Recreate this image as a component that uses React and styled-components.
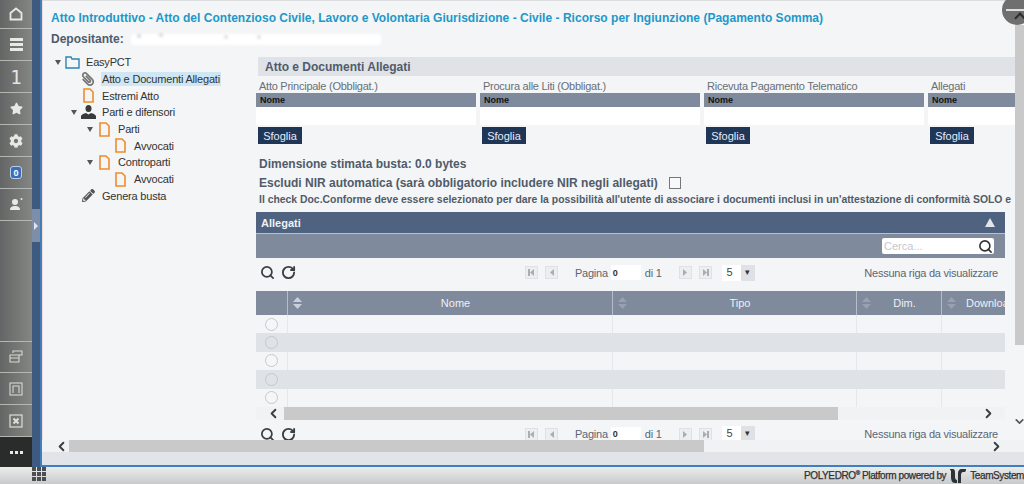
import React from 'react';
import styled, { createGlobalStyle } from 'styled-components';
import { FaStar, FaCog, FaPencilAlt, FaPaperclip } from 'react-icons/fa';
import { Search, RotateCw, ChevronLeft, ChevronRight, ChevronDown } from 'lucide-react';

const GlobalStyle = createGlobalStyle`
  html, body {
    margin: 0;
    padding: 0;
    background: #f3f5f7;
    overflow: hidden;
  }
  * { box-sizing: border-box; }
`;

const Frame = styled.div`
  width: 1024px;
  height: 484px;
  display: flex;
  flex-direction: column;
  position: relative;
  overflow: hidden;
  font-family: "Liberation Sans", Arial, sans-serif;
`;

const Shell = styled.div`
  display: flex;
  height: 467px;
`;

/* left rail */
const Rail = styled.nav`
  width: 32px;
  flex: none;
  display: flex;
  flex-direction: column;
  justify-content: space-between;
  background: linear-gradient(90deg, #646665, #848683);
`;

const RailGroup = styled.div`
  display: flex;
  flex-direction: column;
`;

const RailItem = styled.div`
  height: ${(p) => p.$h || 32}px;
  display: flex;
  align-items: center;
  justify-content: center;
  color: #e8e9e6;
  border-bottom: 1px solid #b4b6b3;
  ${(p) => p.$top && 'border-top: 1px solid #b4b6b3;'}
`;

const RailNumber = styled.span`
  font-family: "DejaVu Sans Mono", monospace;
  font-size: 19px;
  color: #e4e5e2;
`;

const Badge = styled.span`
  width: 12px;
  height: 13px;
  border-radius: 3px;
  background: #3f6db5;
  border: 1px solid #b9cdf0;
  color: #fff;
  font-size: 9px;
  font-weight: bold;
  display: flex;
  align-items: center;
  justify-content: center;
`;

const More = styled.div`
  height: 30px;
  background: #2a2b2b;
  display: flex;
  align-items: center;
  justify-content: center;
  gap: 2px;
`;

const Dot = styled.i`
  width: 3px;
  height: 3px;
  background: #e8e8e8;
`;

const Strip = styled.div`
  width: 8px;
  flex: none;
  background: #3e5a7e;
  position: relative;
`;

const StripHandle = styled.div`
  position: absolute;
  top: 209px;
  left: 0;
  width: 8px;
  height: 33px;
  background: #7d8fa8;
  display: flex;
  align-items: center;
  justify-content: center;
  &::after {
    content: '';
    border-left: 4px solid #dfe6ef;
    border-top: 4px solid transparent;
    border-bottom: 4px solid transparent;
  }
`;

/* main window */
const Window = styled.div`
  flex: 1;
  min-width: 0;
  display: flex;
  flex-direction: column;
  border-left: 2px solid #3f7fc0;
  border-bottom: 2px solid #3f7fc0;
`;

const Viewport = styled.div`
  height: 440px;
  display: flex;
  border-top: 1px solid #dcdddf;
  border-left: 1px solid #f2ddd6;
`;

const Page = styled.main`
  flex: 1;
  min-width: 0;
  overflow: hidden;
  background: #f3f5f7;
`;

const VScroll = styled.div`
  width: 9px;
  flex: none;
  background: #f3f5f7;
  display: flex;
  flex-direction: column;
  align-items: center;
`;

const VThumb = styled.div`
  width: 9px;
  margin-top: 24px;
  height: 320px;
  background: #c9c9c9;
`;

const VArrow = styled.div`
  margin-top: 70px;
  color: #555;
  display: flex;
`;

const Collapse = styled.div`
  position: absolute;
  top: -5px;
  left: 1002px;
  width: 30px;
  height: 30px;
  border-radius: 50%;
  background: #6f6f6f;
  &::before {
    content: '';
    position: absolute;
    left: 4px;
    right: 6px;
    top: 14px;
    height: 2px;
    background: #dedede;
  }
  &::after {
    content: '';
    position: absolute;
    left: 14px;
    top: 19px;
    width: 6px;
    height: 6px;
    border-left: 2px solid #2e2e2e;
    border-top: 2px solid #2e2e2e;
    transform: rotate(45deg);
  }
`;

const Title = styled.h1`
  margin: 10px 0 0 8px;
  font-size: 12px;
  letter-spacing: 0.02px;
  line-height: 14px;
  font-weight: bold;
  color: #2198c9;
  white-space: nowrap;
`;

const Owner = styled.div`
  margin: 7px 0 0 8px;
  display: flex;
  align-items: center;
  height: 14px;
  font-size: 12px;
  font-weight: bold;
  color: #4f5b6b;
`;

const Redacted = styled.span`
  margin-left: 7px;
  width: 250px;
  height: 11px;
  background:
    radial-gradient(circle 2px at 8px 2px, #8a8a8a, transparent),
    radial-gradient(circle 2px at 30px 1px, #8a8a8a, transparent),
    radial-gradient(circle 2px at 95px 3px, #a0a0a0, transparent),
    radial-gradient(circle 2px at 128px 3px, #a0a0a0, transparent),
    #fff;
  filter: blur(1.5px);
`;

const Body = styled.div`
  margin-top: 8px;
  display: flex;
`;

/* tree */
const Tree = styled.ul`
  width: 213px;
  flex: none;
  margin: 0;
  padding: 0;
  list-style: none;
`;

const TreeRow = styled.li`
  height: 16.7px;
  display: flex;
  align-items: center;
  padding-left: ${(p) => 10 + p.$level * 16}px;
  font-size: 11px;
  letter-spacing: -0.2px;
  color: #333;
  white-space: nowrap;
`;

const Caret = styled.span`
  width: 9px;
  flex: none;
  display: flex;
  justify-content: center;
  &::before {
    content: '';
    display: ${(p) => (p.$open ? 'block' : 'none')};
    border-top: 5px solid #555;
    border-left: 3px solid transparent;
    border-right: 3px solid transparent;
  }
`;

const TreeIcon = styled.span`
  width: 16px;
  margin-left: 2px;
  flex: none;
  display: flex;
  justify-content: center;
  color: #444;
`;

const TreeLabel = styled.span`
  margin-left: 5px;
  padding: 1px 1px;
  background: ${(p) => (p.$selected ? '#cfe6f5' : 'transparent')};
`;

/* right panel */
const Panel = styled.section`
  flex: 1;
  min-width: 0;
  padding-top: 3px;
`;

const SectionHead = styled.h2`
  margin: 0 0 0 2px;
  height: 19px;
  padding-left: 7px;
  display: flex;
  align-items: center;
  font-size: 12px;
  font-weight: bold;
  color: #4f5b6b;
  background: #dfe2e6;
`;

const Uploads = styled.div`
  display: grid;
  grid-template-columns: repeat(4, 220px);
  gap: 4px;
`;

const Upload = styled.div`
  display: flex;
  flex-direction: column;
  align-items: flex-start;
`;

const UploadLabel = styled.div`
  height: 17px;
  padding: 4px 0 0 3px;
  font-size: 11px;
  letter-spacing: -0.25px;
  line-height: 13px;
  color: #6a6f76;
  white-space: nowrap;
`;

const UploadHead = styled.div`
  width: 100%;
  height: 14px;
  padding-left: 4px;
  display: flex;
  align-items: center;
  background: #7f8a9c;
  font-size: 9px;
  font-weight: bold;
  color: #111;
`;

const UploadBox = styled.div`
  width: 100%;
  height: 18px;
  background: #fff;
`;

const Browse = styled.button`
  margin: 2px 0 0 2px;
  width: 44px;
  height: 17px;
  padding: 0;
  border: 0;
  background: #1f3657;
  color: #e8edf4;
  font-family: inherit;
  font-size: 11px;
`;

const Info = styled.div`
  margin: ${(p) => p.$mt}px 0 0 3px;
  height: 14px;
  display: flex;
  align-items: center;
  font-size: ${(p) => p.$size || 12}px;
  font-weight: bold;
  color: #515b68;
  white-space: nowrap;
`;

const Checkbox = styled.span`
  margin-left: 11px;
  width: 12px;
  height: 12px;
  flex: none;
  border: 1px solid #777;
  background: #f8f8f8;
`;

/* grid */
const GridBox = styled.div`
  width: 749px;
  margin-top: 6px;
`;

const GridCaption = styled.div`
  height: 22px;
  padding: 0 10px 0 5px;
  display: flex;
  align-items: center;
  justify-content: space-between;
  background: #4f6280;
  border-bottom: 1px solid #b6c0cf;
  font-size: 11px;
  font-weight: bold;
  color: #eef1f5;
  &::after {
    content: '';
    border-bottom: 9px solid #e2e6ec;
    border-left: 5px solid transparent;
    border-right: 5px solid transparent;
  }
`;

const SearchBar = styled.div`
  height: 24px;
  padding-right: 11px;
  display: flex;
  align-items: center;
  justify-content: flex-end;
  background: #7f8a9c;
`;

const SearchField = styled.div`
  width: 112px;
  height: 16px;
  padding: 0 1px 0 2px;
  border-radius: 2px;
  display: flex;
  align-items: center;
  justify-content: space-between;
  background: #fff;
  font-size: 11px;
  color: #c5c8cc;
`;

const Toolbar = styled.div`
  height: 32px;
  padding-bottom: 3px;
  display: flex;
  align-items: center;
  font-size: 11px;
  letter-spacing: -0.25px;
  color: #5b6675;
`;

const ToolIcons = styled.div`
  width: 269px;
  flex: none;
  padding-left: 4px;
  display: flex;
  align-items: center;
  gap: 6px;
  color: #3c3f42;
`;

const PagerButton = styled.span`
  width: 13px;
  height: 13px;
  flex: none;
  border: 1px solid #dfe1e4;
  background: #eceef0;
  display: flex;
  align-items: center;
  justify-content: center;
  color: #a9aeb4;
  margin-left: ${(p) => p.$ml || 0}px;
`;

const PagerText = styled.span`
  margin-left: ${(p) => p.$ml}px;
  white-space: nowrap;
`;

const PageInput = styled.span`
  margin-left: 3px;
  width: 30px;
  height: 15px;
  padding-left: 2px;
  background: #fff;
  font-size: 9px;
  font-weight: bold;
  color: #333;
  display: flex;
  align-items: center;
`;

const PageSize = styled.span`
  margin-left: 10px;
  width: 33px;
  height: 16px;
  display: flex;
  background: #fff;
  color: #444;
  font-size: 11px;
  line-height: 14px;
  padding-left: 5px;
  justify-content: space-between;
  &::after {
    content: '▾';
    width: 14px;
    background: #dfe1e4;
    text-align: center;
    font-size: 9px;
    color: #333;
  }
`;

const Status = styled.span`
  margin-left: auto;
  padding-right: 7px;
  white-space: nowrap;
`;

const columns = '31px 325px 244px 85px 64px';

const HeadRow = styled.div`
  margin-top: 1px;
  height: 24px;
  display: grid;
  grid-template-columns: ${columns};
  background: #7f8a9c;
`;

const HeadCell = styled.div`
  position: relative;
  overflow: hidden;
  display: flex;
  align-items: center;
  justify-content: ${(p) => (p.$left ? 'flex-start' : 'center')};
  padding-left: ${(p) => (p.$left ? 24 : 11)}px;
  border-left: ${(p) => (p.$first ? '0' : '1px solid #b5bdc9')};
  font-size: 11px;
  color: #eef1f5;
  white-space: nowrap;
`;

const SortMark = styled.svg`
  position: absolute;
  left: 5px;
  top: 6px;
`;

const Row = styled.div`
  height: 18.4px;
  display: grid;
  grid-template-columns: ${columns};
  background: ${(p) => (p.$alt ? '#dfe2e6' : '#f3f5f7')};
`;

const Cell = styled.div`
  display: flex;
  align-items: center;
  justify-content: center;
  border-left: ${(p) => (p.$first || p.$alt ? '0' : '1px solid #e5e7ea')};
`;

const Radio = styled.span`
  width: 13px;
  height: 13px;
  border-radius: 50%;
  border: 1px solid #c6c9cc;
  background: ${(p) => (p.$alt ? '#dfe2e6' : '#f5f6f7')};
`;

const HBar = styled.div`
  height: ${(p) => p.$h}px;
  display: flex;
  align-items: stretch;
  background: #f0f2f4;
`;

const HEnd = styled.div`
  width: ${(p) => p.$w}px;
  flex: none;
  padding-left: ${(p) => p.$pl || 0}px;
  display: flex;
  align-items: center;
  justify-content: ${(p) => p.$justify || 'center'};
  color: #3a3d40;
`;

const HThumb = styled.div`
  width: ${(p) => p.$w}px;
  flex: none;
  background: #c9c9c9;
`;

const HFill = styled.div`
  flex: 1;
  display: flex;
  align-items: center;
  justify-content: flex-end;
  padding-right: ${(p) => p.$pr}px;
  color: #3a3d40;
`;

const Band = styled.div`
  flex: 1;
  background: #e1e4e9;
`;

/* footer */
const Footer = styled.footer`
  flex: 1;
  display: flex;
  align-items: center;
  justify-content: space-between;
  padding-left: 32px;
  background: linear-gradient(180deg, #ececec, #c8cacc);
`;

const Waffle = styled.div`
  width: 14px;
  height: 14px;
  display: grid;
  grid-template-columns: repeat(3, 4px);
  gap: 1px;
  margin-top: -3px;
  i { background: #4c4f52; }
`;

const Brand = styled.div`
  display: flex;
  align-items: center;
  gap: 4px;
  font-size: 10px;
  letter-spacing: -0.4px;
  color: #2f3134;
  -webkit-text-stroke: 0.25px #2f3134;
  white-space: nowrap;
  sup { font-size: 6px; line-height: 0; }
`;

const Doc = () => (
  <svg width="11" height="15" viewBox="0 0 11 15" fill="none" stroke="#f08c2a" strokeWidth="1.6">
    <path d="M1 1h6l3 3v10H1z" />
  </svg>
);

const Folder = () => (
  <svg width="15" height="13" viewBox="0 0 15 13" fill="none" stroke="#2a85b3" strokeWidth="1.4">
    <path d="M1 12V1h5l1 2h7v9z" />
  </svg>
);

const Person = () => (
  <svg width="15" height="14" viewBox="0 0 15 14" fill="#3a3a3a">
    <ellipse cx="7.5" cy="3.5" rx="3" ry="3.5" />
    <path d="M0 14v-2.5C0 9.500 3 8.500 5 8l2.500 1.500L10 8c2 .5 5 1.500 5 3.500V14z" />
  </svg>
);

const Glyph = ({ kind }) => {
  const flip = kind === 'next' || kind === 'last';
  const bar = kind === 'first' || kind === 'last';
  return (
    <svg width="9" height="9" viewBox="0 0 9 9" fill="currentColor" style={flip ? { transform: 'scaleX(-1)' } : undefined}>
      <path d="M7 1v7L3 4.500z" />
      {bar && <rect x="1" y="1" width="2" height="7" />}
    </svg>
  );
};

const Pager = () => (
  <>
    <PagerButton><Glyph kind="first" /></PagerButton>
    <PagerButton $ml={7}><Glyph kind="prev" /></PagerButton>
    <PagerText $ml={17}>Pagina</PagerText>
    <PageInput>0</PageInput>
    <PagerText $ml={4}>di 1</PagerText>
    <PagerButton $ml={17}><Glyph kind="next" /></PagerButton>
    <PagerButton $ml={7}><Glyph kind="last" /></PagerButton>
    <PageSize>5</PageSize>
  </>
);

const GridToolbar = () => (
  <Toolbar>
    <ToolIcons>
      <Search size={15} strokeWidth={2.8} />
      <RotateCw size={15} strokeWidth={3} />
    </ToolIcons>
    <Pager />
    <Status>Nessuna riga da visualizzare</Status>
  </Toolbar>
);

const Sort = ({ bright }) => (
  <SortMark width="9" height="12" viewBox="0 0 9 12" fill={bright ? '#c9d0da' : '#97a1b0'}>
    <path d="M4.500 0L9 5H0z" />
    <path d="M0 7h9l-4.500 5z" />
  </SortMark>
);

const treeRows = [
  { level: 0, open: true, icon: <Folder />, label: 'EasyPCT' },
  { level: 1, icon: <FaPaperclip size={14} color="#777" style={{ transform: 'scaleX(-1)' }} />, label: 'Atto e Documenti Allegati', selected: true },
  { level: 1, icon: <Doc />, label: 'Estremi Atto' },
  { level: 1, open: true, icon: <Person />, label: 'Parti e difensori' },
  { level: 2, open: true, icon: <Doc />, label: 'Parti' },
  { level: 3, icon: <Doc />, label: 'Avvocati' },
  { level: 2, open: true, icon: <Doc />, label: 'Controparti' },
  { level: 3, icon: <Doc />, label: 'Avvocati' },
  { level: 1, icon: <FaPencilAlt size={13} color="#555" />, label: 'Genera busta' },
];

const uploads = ['Atto Principale (Obbligat.)', 'Procura alle Liti (Obbligat.)', 'Ricevuta Pagamento Telematico', 'Allegati'];

const App = () => {
  return (
    <Frame>
      <GlobalStyle />
      <Shell>
        <Rail>
          <RailGroup>
            <RailItem $h={29}>
              <svg width="14" height="14" viewBox="0 0 14 14" fill="none" stroke="#e8e9e6" strokeWidth="1.8">
                <path d="M1.500 12.500V6L7 1.500 12.500 6v6.500z" />
              </svg>
            </RailItem>
            <RailItem>
              <svg width="13" height="13" viewBox="0 0 13 13" fill="#e8e9e6">
                <rect y="0" width="13" height="3" />
                <rect y="5" width="13" height="3" />
                <rect y="10" width="13" height="3" />
              </svg>
            </RailItem>
            <RailItem><RailNumber>1</RailNumber></RailItem>
            <RailItem><FaStar size={13} /></RailItem>
            <RailItem><FaCog size={14} /></RailItem>
            <RailItem><Badge>0</Badge></RailItem>
            <RailItem>
              <svg width="15" height="15" viewBox="0 0 15 15" fill="#e8e9e6">
                <circle cx="6" cy="5" r="3" />
                <path d="M1 13c0-3 2-4 5-4s5 1 5 4z" />
                <circle cx="12.500" cy="2" r="1" />
              </svg>
            </RailItem>
          </RailGroup>
          <RailGroup>
            <RailItem $top>
              <svg width="14" height="14" viewBox="0 0 14 14" fill="none" stroke="#d6d8d5" strokeWidth="1.1">
                <path d="M4 3V1h9v4h-3" />
                <path d="M1 5h9v7H1zM1 8h9" />
              </svg>
            </RailItem>
            <RailItem>
              <svg width="14" height="14" viewBox="0 0 14 14" fill="none" stroke="#d6d8d5" strokeWidth="1.1">
                <rect x="1" y="1" width="12" height="12" />
                <path d="M4 11V4h6v7" />
              </svg>
            </RailItem>
            <RailItem>
              <svg width="14" height="14" viewBox="0 0 14 14" fill="none" stroke="#dcdedb" strokeWidth="1.2">
                <rect x="1" y="1" width="12" height="12" />
                <path d="M4.500 4.500l5 5M9.500 4.500l-5 5" strokeWidth="2" />
              </svg>
            </RailItem>
            <More><Dot /><Dot /><Dot /></More>
          </RailGroup>
        </Rail>
        <Strip><StripHandle /></Strip>
        <Window>
          <Viewport>
            <Page>
              <Title>Atto Introduttivo - Atto del Contenzioso Civile, Lavoro e Volontaria Giurisdizione - Civile - Ricorso per Ingiunzione (Pagamento Somma)</Title>
              <Owner>Depositante:<Redacted /></Owner>
              <Body>
                <Tree>
                  {treeRows.map((row, i) => (
                    <TreeRow key={i} $level={row.level}>
                      <Caret $open={row.open} />
                      <TreeIcon>{row.icon}</TreeIcon>
                      <TreeLabel $selected={row.selected}>{row.label}</TreeLabel>
                    </TreeRow>
                  ))}
                </Tree>
                <Panel>
                  <SectionHead>Atto e Documenti Allegati</SectionHead>
                  <Uploads>
                    {uploads.map((label) => (
                      <Upload key={label}>
                        <UploadLabel>{label}</UploadLabel>
                        <UploadHead>Nome</UploadHead>
                        <UploadBox />
                        <Browse>Sfoglia</Browse>
                      </Upload>
                    ))}
                  </Uploads>
                  <Info $mt={13}>Dimensione stimata busta: 0.0 bytes</Info>
                  <Info $mt={5}>Escludi NIR automatica (sarà obbligatorio includere NIR negli allegati)<Checkbox /></Info>
                  <Info $mt={2} $size={10.4}>Il check Doc.Conforme deve essere selezionato per dare la possibilità all'utente di associare i documenti inclusi in un'attestazione di conformità SOLO e</Info>
                  <GridBox>
                    <GridCaption>Allegati</GridCaption>
                    <SearchBar>
                      <SearchField>Cerca...<Search size={15} strokeWidth={2.6} color="#333" /></SearchField>
                    </SearchBar>
                    <GridToolbar />
                    <HeadRow>
                      <HeadCell $first />
                      <HeadCell><Sort bright />Nome</HeadCell>
                      <HeadCell><Sort />Tipo</HeadCell>
                      <HeadCell><Sort />Dim.</HeadCell>
                      <HeadCell $left><Sort />Download</HeadCell>
                    </HeadRow>
                    {[0, 1, 2, 3, 4].map((n) => {
                      const alt = n % 2 === 1;
                      return (
                        <Row key={n} $alt={alt}>
                          <Cell $first><Radio $alt={alt} /></Cell>
                          <Cell $alt={alt} />
                          <Cell $alt={alt} />
                          <Cell $alt={alt} />
                          <Cell $alt={alt} />
                        </Row>
                      );
                    })}
                    <HBar $h={13}>
                      <HEnd $w={28} $pl={6}><ChevronLeft size={15} strokeWidth={3} /></HEnd>
                      <HThumb $w={554} />
                      <HFill $pr={9}><ChevronRight size={15} strokeWidth={3} /></HFill>
                    </HBar>
                    <GridToolbar />
                  </GridBox>
                </Panel>
              </Body>
            </Page>
            <VScroll>
              <VThumb />
              <VArrow><ChevronDown size={13} strokeWidth={3} /></VArrow>
            </VScroll>
          </Viewport>
          <HBar $h={12}>
            <HEnd $w={27} $justify="flex-end"><ChevronLeft size={15} strokeWidth={3} /></HEnd>
            <HThumb $w={635} />
            <HFill $pr={20}><ChevronRight size={15} strokeWidth={3} /></HFill>
          </HBar>
          <Band />
        </Window>
      </Shell>
      <Footer>
        <Waffle>
          {Array.from({ length: 9 }).map((_, i) => <i key={i} />)}
        </Waffle>
        <Brand>
          <span>POLYEDRO<sup>®</sup> Platform powered by</span>
          <svg width="16" height="14" viewBox="0 0 16 14" fill="#2d3138">
            <path d="M0 0h3c1 0 2 1 2 3v5c0 2 1 3 2 3v3H5C2 14 1 11 1 8V3C1 2 1 1 0 1z" />
            <path d="M16 0h-4C9 0 8 2 8 5v9h3V6c0-2 1-3 2-3h2c1-1 1-2 1-3z" />
          </svg>
          <span>TeamSystem</span>
        </Brand>
      </Footer>
      <Collapse />
    </Frame>
  );
};

export default App;
